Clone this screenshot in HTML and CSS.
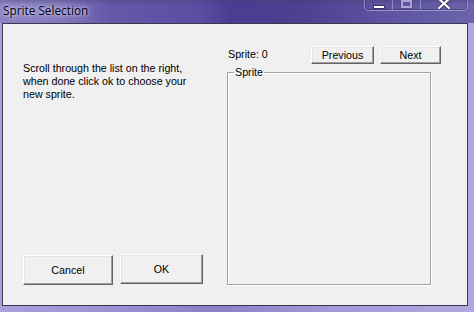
FILE: index.html
```html
<!DOCTYPE html>
<html>
<head>
<meta charset="utf-8">
<link rel="stylesheet" href="styles.css">
</head>
<body>
<div class="window">
  <div class="titlebar">
    <div class="title">Sprite Selection</div>
    <div class="controls">
      <div class="ctl ctl-min"><span class="min-bar"></span></div>
      <div class="ctl ctl-max"><span class="max-box"></span></div>
      <div class="ctl ctl-close">
        <svg width="14" height="11" viewBox="0 0 14 11"><path d="M2 1 L12 10 M12 1 L2 10" stroke="#3a3560" stroke-width="4" stroke-linecap="square"/><path d="M2 1 L12 10 M12 1 L2 10" stroke="#fff" stroke-width="2.2" stroke-linecap="square"/></svg>
      </div>
    </div>
  </div>
  <div class="frame">
    <div class="client">
      <div class="left">
        <p class="intro">Scroll through the list on the right,<br>when done click ok to choose your<br>new sprite.</p>
        <div class="actions">
          <button class="btn btn-cancel">Cancel</button>
          <button class="btn btn-ok">OK</button>
        </div>
      </div>
      <div class="right">
        <div class="toprow">
          <span class="count">Sprite: 0</span>
          <button class="btn btn-prev">Previous</button>
          <button class="btn btn-next">Next</button>
        </div>
        <fieldset class="group">
          <legend>Sprite</legend>
        </fieldset>
      </div>
    </div>
    <div class="rightedge"></div>
  </div>
</div>
</body>
</html>
```
FILE: styles.css
```css
* { box-sizing: border-box; }
html, body { margin: 0; padding: 0; }
body {
  width: 474px;
  height: 312px;
  overflow: hidden;
  background: linear-gradient(90deg, #a8a0dc 0%, #9c94d4 20%, #8a80c8 45%, #a29ad6 70%, #b0a8e0 100%);
  font-family: "Liberation Sans", Arial, sans-serif;
  font-size: 10.7px;
  color: #000;
}
.window { width: 474px; height: 312px; display: flex; flex-direction: column; }
.titlebar {
  height: 23px;
  display: flex;
  justify-content: space-between;
  background:
    linear-gradient(180deg, rgba(70,60,110,0.35) 0px, rgba(0,0,0,0) 5px),
    linear-gradient(90deg, #8c84c4 0px, #8279bd 60px, #6458a8 110px, #5a4ea2 200px, #4a3c92 230px, #4c4090 300px, #5c52a0 380px, #6c64ac 474px);
}
.title {
  padding: 3px 0 0 3px;
  font-family: "Open Sans", "Noto Sans", sans-serif;
  font-size: 11.8px;
  line-height: 15px;
  color: #000;
  text-shadow: 0 0 6px rgba(235,230,255,0.9), 0 0 3px rgba(235,230,255,0.8);
}
.controls {
  display: flex;
  margin-right: 6px;
  height: 15px;
  margin-top: -4px;
  border: 1px solid rgba(200,195,235,0.55);
  border-top: none;
  border-radius: 0 0 5px 5px;
  box-shadow: inset 0 0 0 1px rgba(40,30,80,0.35);
}
.ctl {
  height: 14px;
  display: flex;
  align-items: center;
  justify-content: center;
  border-right: 1px solid rgba(200,195,235,0.45);
}
.ctl-min { width: 28px; }
.ctl-max { width: 28px; }
.ctl-close { width: 46px; border-right: none; }
.min-bar {
  width: 12px; height: 4px; margin-top: 8px;
  background: #fff;
  border: 1px solid #3a3560;
}
.max-box {
  width: 11px; height: 8px; margin-top: 1px;
  border: 2px solid rgba(190,185,225,0.8);
  box-shadow: 0 0 0 1px rgba(70,60,120,0.4);
}
.frame { flex: 1; display: flex; padding-left: 2px; }
.client {
  width: 466px;
  height: 283px;
  border: 1px solid #3a3850;
  background: #f0f0f0;
  display: flex;
}
.rightedge { flex: 1; }
.left {
  width: 224px;
  display: flex;
  flex-direction: column;
  justify-content: space-between;
  padding: 38px 0 20px 20px;
}
.intro { margin: 0; line-height: 13px; font-size: 10.7px; }
.actions { display: flex; align-items: flex-start; gap: 7px; }
.btn {
  font-family: "Liberation Sans", Arial, sans-serif;
  font-size: 10.7px;
  color: #000;
  background: #f0f0f0;
  border: 1px solid;
  border-color: #fff #646464 #646464 #fff;
  box-shadow: inset -1px -1px 0 #a0a0a0, inset 1px 1px 0 #e3e3e3;
  padding: 0;
  margin: 0;
}
.btn-cancel { width: 90px; height: 30px; margin-top: 1px; }
.btn-ok { width: 83px; height: 30px; }
.right { flex: 1; padding: 22px 0 0 0; display: flex; flex-direction: column; }
.toprow { display: flex; align-items: flex-start; height: 20px; }
.count { width: 84px; padding-left: 1px; line-height: 13px; margin-top: 2px; }
.btn-prev { width: 63px; height: 18px; }
.btn-next { width: 61px; height: 18px; margin-left: 6px; }
.group {
  margin: 0;
  padding: 0;
  width: 204px;
  height: 219px;
  border: 1px solid #a0a0a0;
  box-shadow: 1px 1px 0 #fff, inset 1px 1px 0 #fff;
}
.group legend {
  margin-left: 6px;
  padding: 0 1px;
  font-size: 10.7px;
  line-height: 12px;
}
```
